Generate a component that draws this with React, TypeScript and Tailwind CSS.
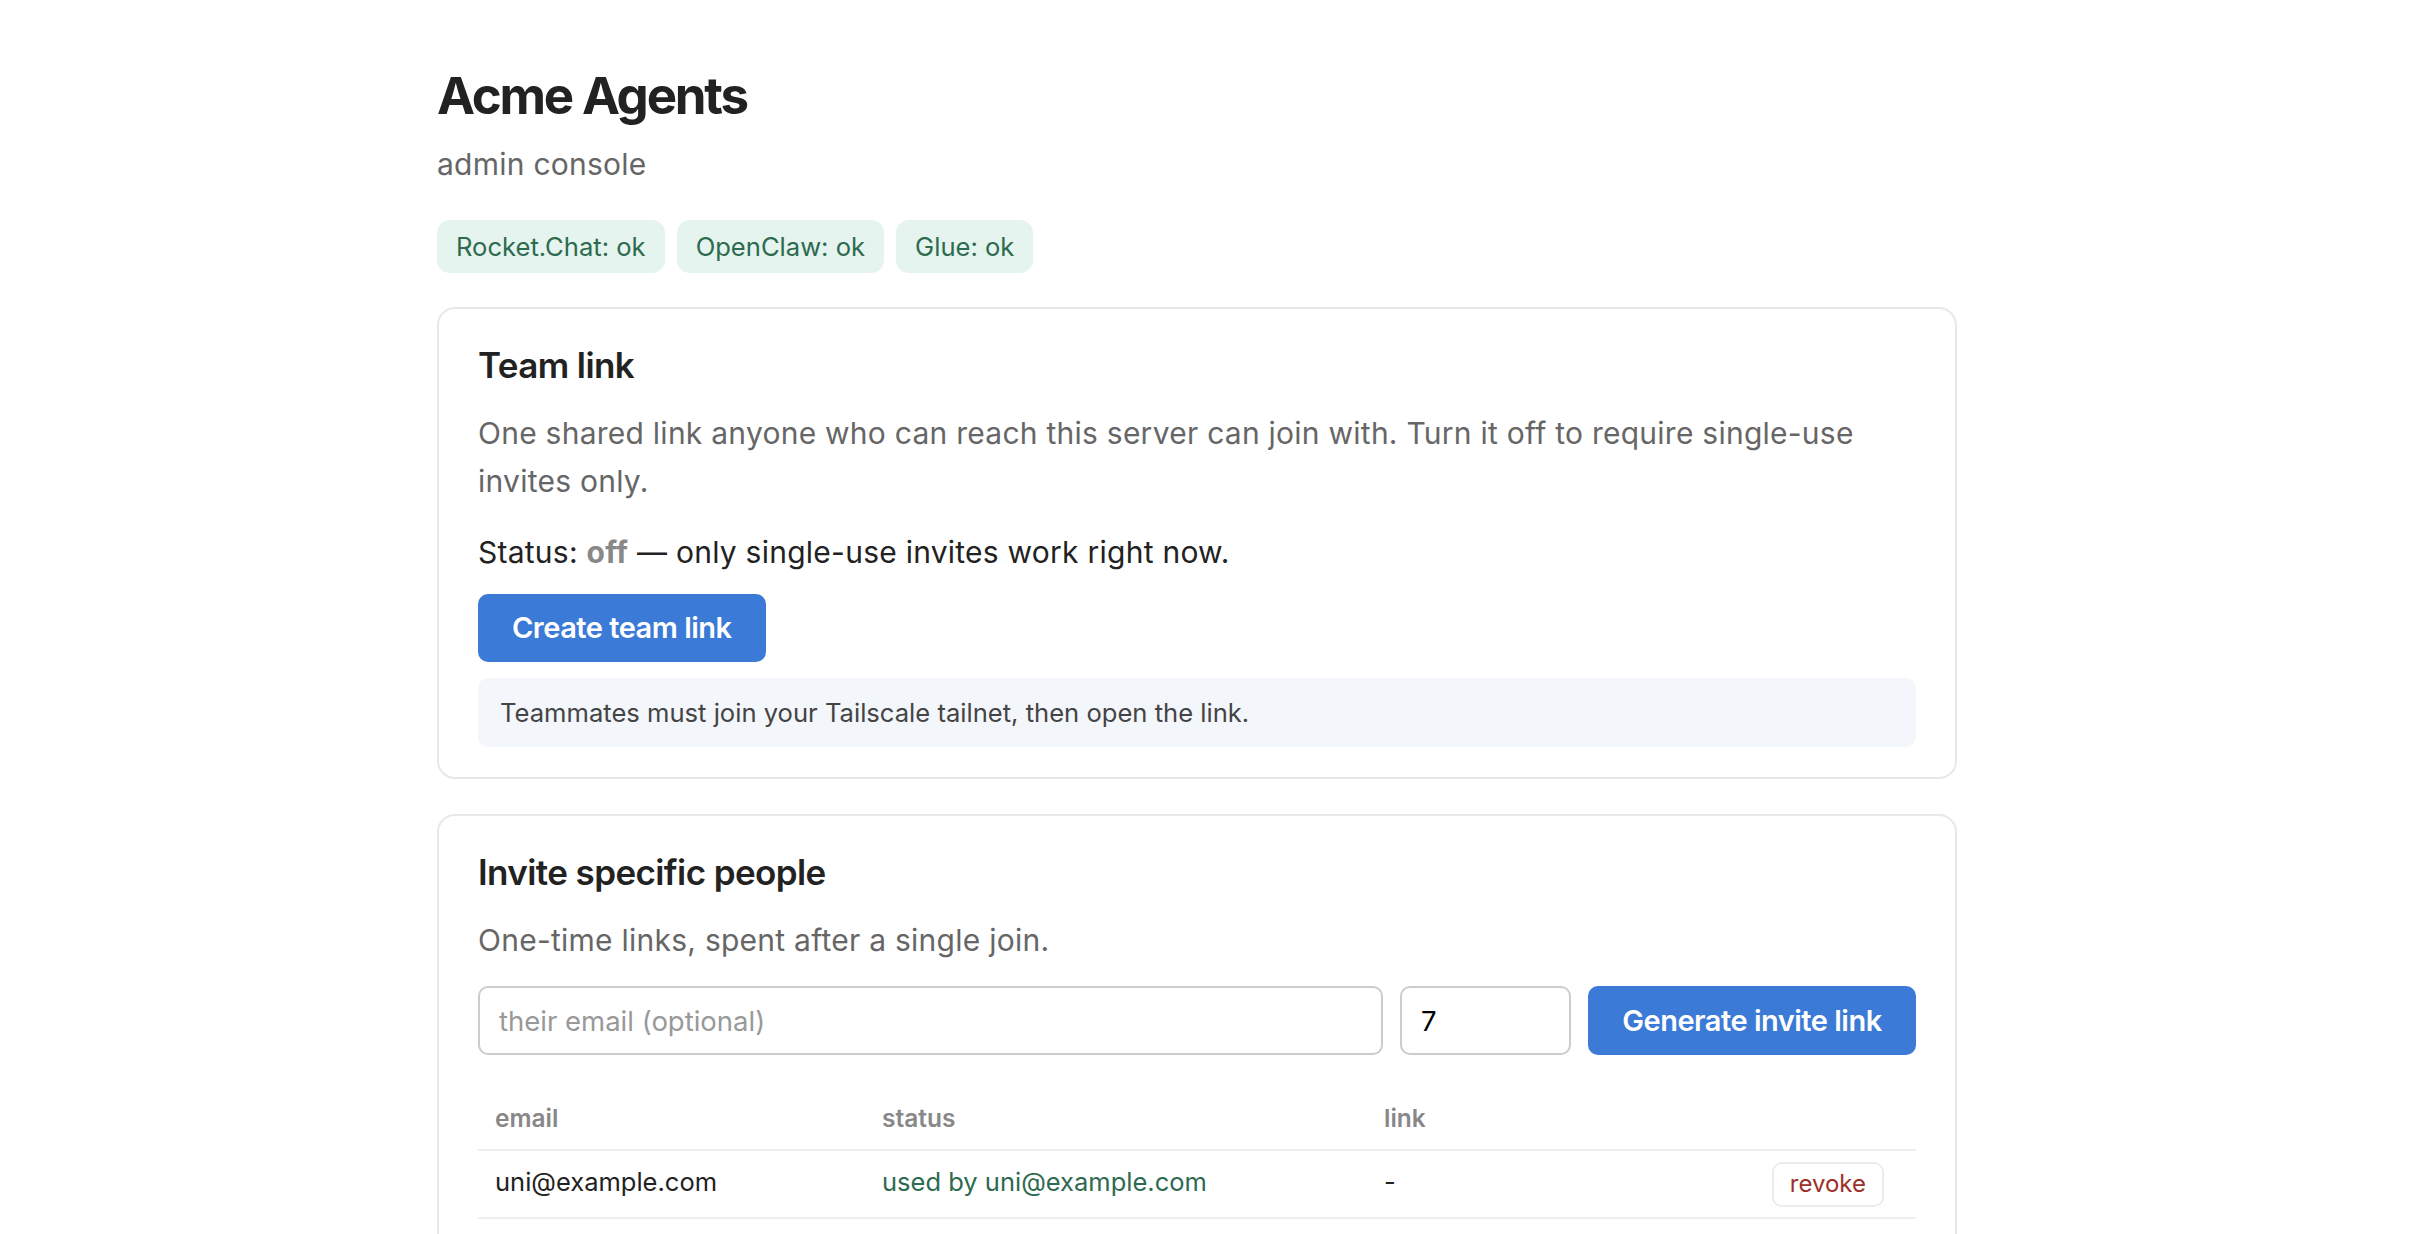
export default function App() {
  return (
    <div className="min-h-screen bg-white text-[#222] font-['Inter','Noto_Sans',sans-serif] antialiased">
      <div className="flex justify-center pr-[30px]">
        <div className="w-[1520px] pt-[65px] pb-[60px]">
          {/* Header */}
          <h1 className="text-[51px] leading-[61px] font-bold tracking-[-2.2px]">Acme Agents</h1>
          <p className="mt-[21px] text-[30px] leading-[35px] tracking-[0.25px] text-[#666]">admin console</p>

          {/* Service health */}
          <div className="mt-[38px] flex gap-[12px]">
            {["Rocket.Chat: ok", "OpenClaw: ok", "Glue: ok"].map((s) => (
              <span
                key={s}
                className="rounded-[13px] bg-[#e5f4ee] px-[19px] py-[12px] text-[25.6px] leading-[29px] text-[#2d6a4f]"
              >
                {s}
              </span>
            ))}
          </div>

          {/* Team link */}
          <section className="mt-[34px] rounded-[18px] border-2 border-[#e7e7ec] px-[39px] pt-[35px] pb-[30px]">
            <h2 className="text-[35px] leading-[42px] font-semibold tracking-[-0.6px]">Team link</h2>
            <p className="mt-[23px] text-[30px] leading-[48px] tracking-[0.25px] text-[#666]">
              One shared link anyone who can reach this server can join with. Turn it off to require single-use
              invites only.
            </p>
            <p className="mt-[23px] text-[30px] leading-[48px] tracking-[0.25px] text-[#222]">
              Status: <span className="font-bold text-[#888]">off</span> — only single-use invites work right now.
            </p>
            <button
              type="button"
              className="mt-[18px] h-[68px] rounded-[10px] bg-[#3b7ad7] px-[34px] text-[29px] font-semibold tracking-[-0.5px] text-white"
            >
              Create team link
            </button>
            <div className="mt-[16px] rounded-[10px] bg-[#f3f6fb] px-[22px] py-[20px] text-[25.6px] leading-[29px] text-[#444]">
              Teammates must join your Tailscale tailnet, then open the link.
            </div>
          </section>

          {/* Single-use invites */}
          <section className="mt-[35px] rounded-[18px] border-2 border-[#e7e7ec] px-[39px] pt-[35px] pb-[40px]">
            <h2 className="text-[35px] leading-[42px] font-semibold tracking-[-0.6px]">Invite specific people</h2>
            <p className="mt-[23px] text-[30px] leading-[48px] tracking-[0.25px] text-[#666]">
              One-time links, spent after a single join.
            </p>

            <div className="mt-[22px] flex gap-[17px]">
              <input
                type="text"
                placeholder="their email (optional)"
                className="h-[69px] flex-1 rounded-[10px] border-2 border-[#cccccc] px-[19px] text-[27.5px] text-[#222] placeholder:text-[#999] outline-none"
              />
              <input
                type="text"
                defaultValue="7"
                className="h-[69px] w-[171px] rounded-[10px] border-2 border-[#cccccc] px-[19px] text-[27.5px] text-black outline-none"
              />
              <button
                type="button"
                className="h-[69px] w-[328px] rounded-[10px] bg-[#3b7ad7] text-[29px] font-semibold tracking-[-0.5px] text-white"
              >
                Generate invite link
              </button>
            </div>

            <table className="mt-[33px] w-full table-fixed border-collapse">
              <thead>
                <tr className="border-b-2 border-[#ededed] text-left text-[24.5px] leading-[27px] text-[#888]">
                  <th className="w-[387px] px-[17px] py-[17px] font-semibold">email</th>
                  <th className="w-[502px] px-[17px] py-[17px] font-semibold">status</th>
                  <th className="px-[17px] py-[17px] font-semibold">link</th>
                  <th className="w-[160px] px-[17px] py-[17px]" />
                </tr>
              </thead>
              <tbody>
                <tr className="border-b-2 border-[#efefef] text-[25.5px] leading-[29px]">
                  <td className="h-[68px] px-[17px] pb-[6px] align-middle text-[#222]">uni@example.com</td>
                  <td className="px-[17px] pb-[6px] align-middle text-[#2d6a4f]">used by uni@example.com</td>
                  <td className="px-[17px] pb-[6px] align-middle text-[#222]">-</td>
                  <td className="pr-[32px] text-right align-middle">
                    <button
                      type="button"
                      className="h-[45px] rounded-[10px] border-2 border-[#ececec] bg-white px-[16px] text-[24px] leading-[28px] text-[#9e2f2a]"
                    >
                      revoke
                    </button>
                  </td>
                </tr>
              </tbody>
            </table>
          </section>
        </div>
      </div>
    </div>
  );
}
